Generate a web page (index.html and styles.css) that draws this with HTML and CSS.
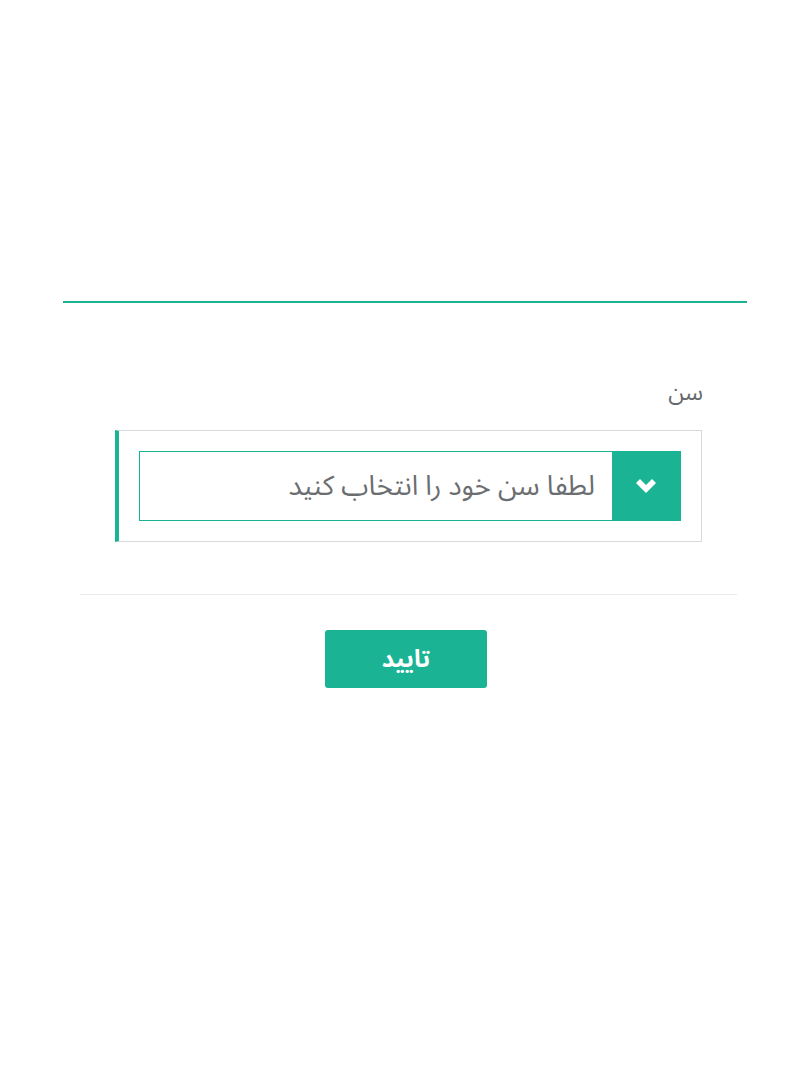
FILE: index.html
```html
<!DOCTYPE html>
<html lang="fa" dir="rtl">
<head>
<meta charset="utf-8">
<link rel="stylesheet" href="styles.css">
</head>
<body>
<div class="page">
  <div class="panel">
    <div class="field">
      <label class="label">سن</label>
      <div class="box">
        <div class="select">
          <div class="select-btn">
            <svg width="20" height="14" viewBox="0 0 20 14"><path d="M0 4 L4 0 L10 6 L16 0 L20 4 L10 14 Z" fill="#fff"/></svg>
          </div>
          <div class="select-text">لطفا سن خود را انتخاب کنید</div>
        </div>
      </div>
    </div>
    <div class="divider"></div>
    <div class="actions">
      <button class="btn">تایید</button>
    </div>
  </div>
</div>
</body>
</html>
```
FILE: styles.css
```css
html, body { margin: 0; padding: 0; background: #fff; }
body { font-family: "Noto Sans Arabic", "Noto Sans Arabic UI", "DejaVu Sans", sans-serif; color: #676a6c; }
.page { padding-top: 301px; }
.panel { margin: 0 63px; border-top: 2px solid #1ab394; }
.field { margin: 0 45px 0 52px; padding-top: 70px; }
.label { display: block; font-size: 23px; line-height: 40px; text-align: right; color: #676a6c; margin-right: -1px; }
.box { margin-top: 17px; border: 1px solid #d9d9d9; border-left: 4px solid #1ab394; padding: 20px; }
.select { display: flex; flex-direction: row; height: 70px; border: 1px solid #1ab394; box-sizing: border-box; }
.select-btn { width: 69px; margin: -1px -1px -1px 0; background: #1ab394; display: flex; align-items: center; justify-content: center; padding-right: 2px; box-sizing: border-box; }
.select-text { flex: 1; font-size: 27.5px; line-height: 68px; padding-right: 17px; color: #6b6e70; }
.divider { margin: 52px 10px 0 17px; border-top: 1px solid #e7eaec; }
.actions { display: flex; justify-content: center; padding-top: 35px; padding-left: 2px; }
.btn { width: 162px; height: 58px; background: #1ab394; border: none; border-radius: 3px; color: #fff; font-family: inherit; font-size: 24px; font-weight: bold; }
```
